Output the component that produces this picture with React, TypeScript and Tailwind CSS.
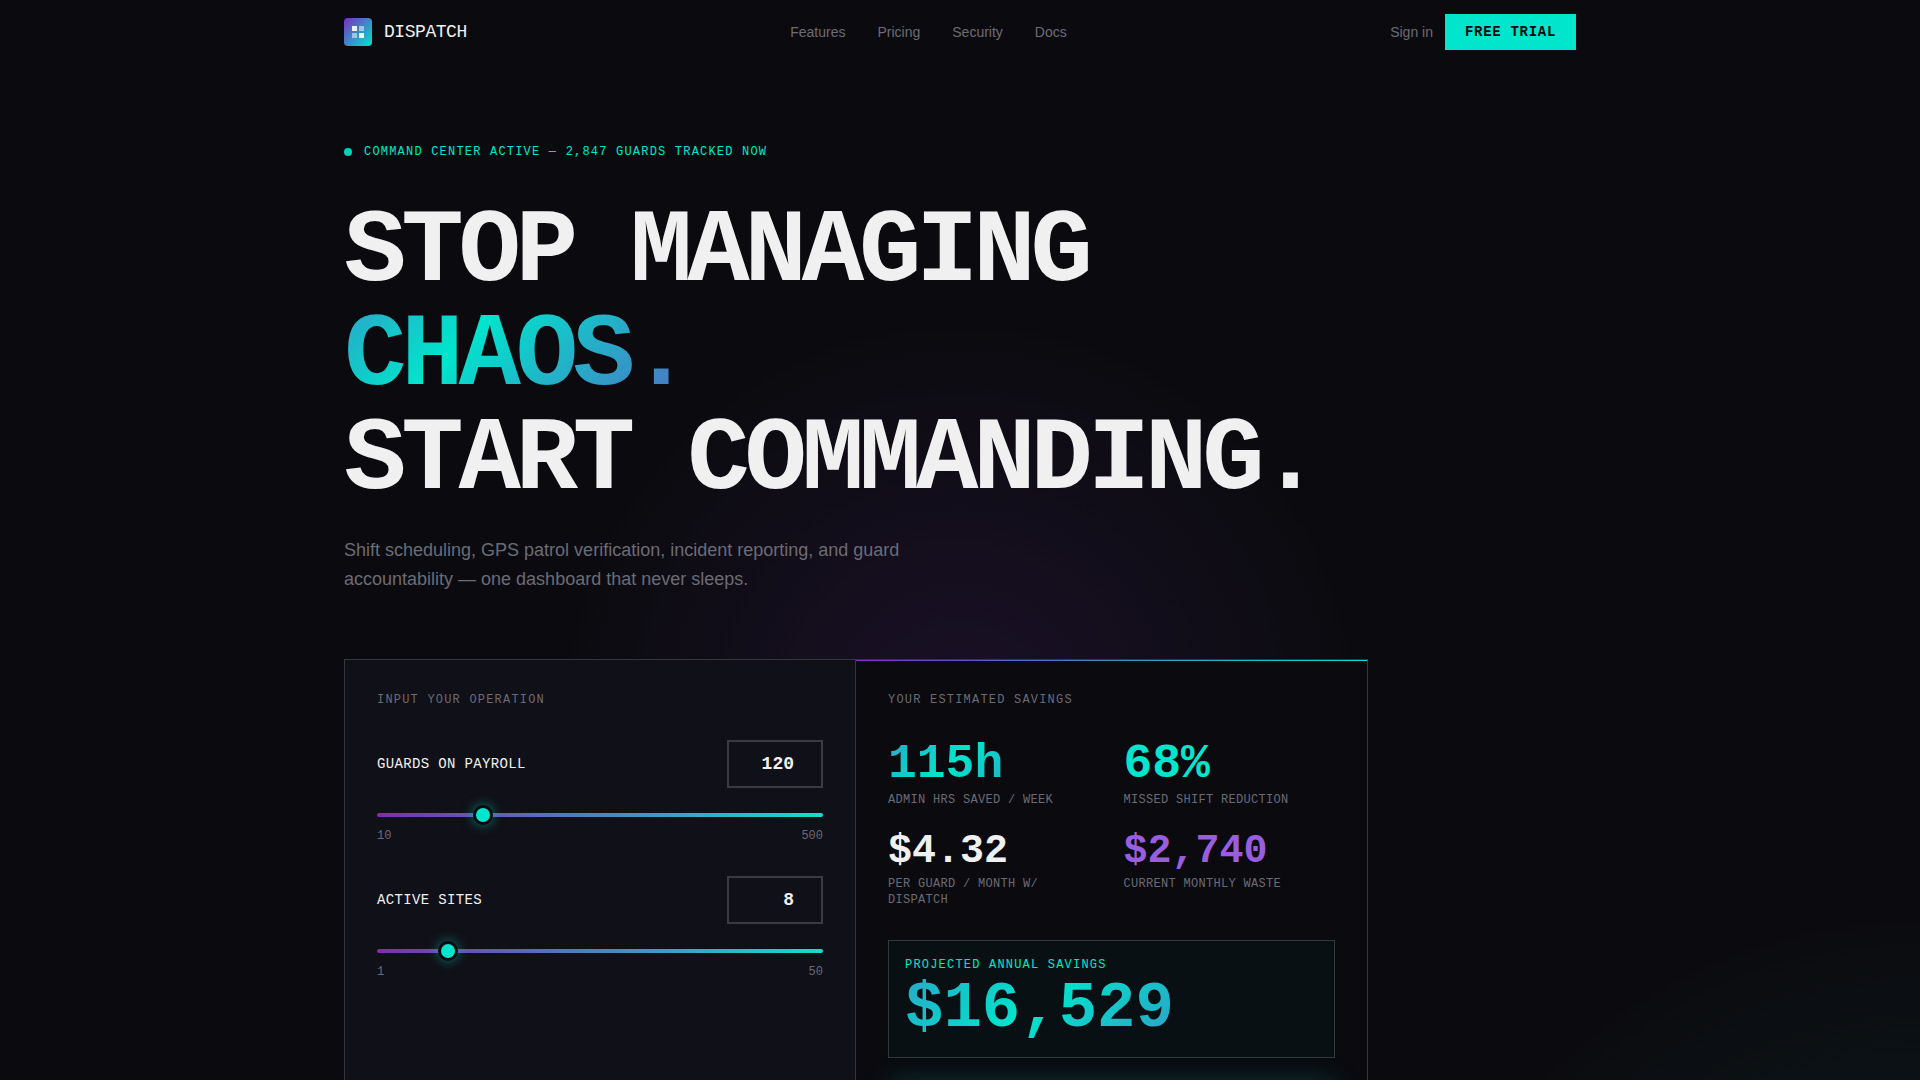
import { useState, ChangeEvent } from 'react';

interface SliderFieldProps {
  id: string;
  label: string;
  min: number;
  max: number;
  value: number;
  onChange: (value: number) => void;
}

interface StatProps {
  value: string;
  label: string;
  valueClass: string;
}

const NAV_LINKS = ['Features', 'Pricing', 'Security', 'Docs'];

const GRADIENT_TEXT =
  'bg-[linear-gradient(135deg,#7b2fbe_0%,#00e5cc_50%,#7b2fbe_100%)] bg-[length:200%_200%] bg-[position:70%_50%] bg-clip-text text-transparent';

const THUMB =
  '[&::-webkit-slider-thumb]:size-5 [&::-webkit-slider-thumb]:-mt-2 [&::-webkit-slider-thumb]:appearance-none [&::-webkit-slider-thumb]:rounded-full [&::-webkit-slider-thumb]:border-[3px] [&::-webkit-slider-thumb]:border-[#0a0a0f] [&::-webkit-slider-thumb]:bg-[#00e5cc] [&::-webkit-slider-thumb]:shadow-[0_0_12px_rgba(0,229,204,0.5)]';

const TRACK =
  '[&::-webkit-slider-runnable-track]:h-1 [&::-webkit-slider-runnable-track]:rounded-xs [&::-webkit-slider-runnable-track]:bg-[linear-gradient(90deg,#7b2fb4,#18dcc8)]';

function Logo() {
  return (
    <a href="#" className="flex items-center gap-3">
      <svg width="28" height="28" viewBox="0 0 28 28" aria-hidden="true">
        <defs>
          <linearGradient id="logo-fill" x1="0" y1="0" x2="1" y2="1">
            <stop offset="0" stopColor="#7b2fbe" />
            <stop offset="1" stopColor="#00e5cc" />
          </linearGradient>
        </defs>
        <rect width="28" height="28" rx="4" fill="url(#logo-fill)" />
        <rect x="8" y="8" width="5" height="5" fill="#fff" fillOpacity="0.9" />
        <rect x="15" y="8" width="5" height="5" fill="#fff" fillOpacity="0.5" />
        <rect x="8" y="15" width="5" height="5" fill="#fff" fillOpacity="0.5" />
        <rect x="15" y="15" width="5" height="5" fill="#fff" fillOpacity="0.9" />
      </svg>
      <span className="font-['Liberation_Mono',monospace] text-lg tracking-tight">DISPATCH</span>
    </a>
  );
}

function SliderField({ id, label, min, max, value, onChange }: SliderFieldProps) {
  const handleChange = (e: ChangeEvent<HTMLInputElement>): void => {
    onChange(Number(e.target.value));
  };

  return (
    <div>
      <div className="flex items-center justify-between">
        <label htmlFor={id} className="text-sm leading-[22px] tracking-wide">{label}</label>
        <input
          id={id}
          type="number"
          min={min}
          max={max}
          value={value}
          onChange={handleChange}
          className="w-24 border-2 border-[#3a3a40] bg-transparent px-3 py-2 text-right text-lg font-bold outline-none focus:border-[#00e5cc]"
        />
      </div>
      <div className="mt-4 mb-0.5 flex h-[22px] items-center">
        <input
          type="range"
          aria-label={label}
          min={min}
          max={max}
          value={value}
          onChange={handleChange}
          className={`w-full cursor-pointer appearance-none bg-transparent ${TRACK} ${THUMB}`}
        />
      </div>
      <div className="flex justify-between text-xs text-[#6b6b76]">
        <span>{min}</span>
        <span>{max}</span>
      </div>
    </div>
  );
}

function Stat({ value, label, valueClass }: StatProps) {
  return (
    <div>
      <div className={`font-bold ${valueClass}`}>{value}</div>
      <div className="mt-1 text-xs tracking-wide text-[#6b6b76]">{label}</div>
    </div>
  );
}

export default function App() {
  const [guards, setGuards] = useState<number>(120);
  const [sites, setSites] = useState<number>(8);

  return (
    <div className="relative min-h-screen bg-[#0b0b0f] bg-[radial-gradient(circle_400px_at_50%_720px,rgba(123,47,190,0.14),transparent),radial-gradient(circle_540px_at_100%_1450px,rgba(0,229,204,0.1),transparent)] font-['Liberation_Sans',sans-serif] text-[#f0f0f0]">
      <header className="mx-auto flex h-16 max-w-7xl items-center justify-between px-6">
        <Logo />
        <nav className="flex gap-8 text-sm text-[#6b6b76]">
          {NAV_LINKS.map((link) => (
            <a key={link} href="#" className="hover:text-white">{link}</a>
          ))}
        </nav>
        <div className="flex items-center gap-3">
          <a href="#" className="text-sm text-[#6b6b76] hover:text-white">Sign in</a>
          <button
            type="button"
            className="bg-[#00e5cc] px-5 py-2 font-['Liberation_Mono',monospace] text-sm font-bold tracking-wider text-[#0a0a0f]"
          >
            FREE TRIAL
          </button>
        </div>
      </header>

      <main className="mx-auto max-w-7xl px-6 pt-20 pb-20">
        <div className="mb-10 flex items-center gap-3 font-['Liberation_Mono',monospace] text-xs tracking-widest text-[#00e5cc]">
          <span className="size-2 rounded-full bg-[#00e5cc] opacity-90" />
          COMMAND CENTER ACTIVE — 2,847 GUARDS TRACKED NOW
        </div>

        <h1 className="mb-6 font-['Liberation_Mono',monospace] text-[104px] leading-none font-bold tracking-tighter">
          <span className="block">STOP MANAGING</span>
          <span className={`block w-fit ${GRADIENT_TEXT}`}>CHAOS.</span>
          <span className="block">START COMMANDING.</span>
        </h1>

        <p className="mb-[65px] max-w-xl text-lg leading-[29px] text-[#6b6b76]">
          Shift scheduling, GPS patrol verification, incident reporting, and guard accountability — one dashboard that
          never sleeps.
        </p>

        <div className="grid max-w-5xl grid-cols-2 border border-[#36363c] font-['Liberation_Mono',monospace]">
          <section className="border-r border-[#36363c] bg-[#101018] p-8">
            <h2 className="mb-8 text-xs tracking-widest text-[#6b6b76]">INPUT YOUR OPERATION</h2>
            <div className="flex flex-col gap-8">
              <SliderField id="guards" label="GUARDS ON PAYROLL" min={10} max={500} value={guards} onChange={setGuards} />
              <SliderField id="sites" label="ACTIVE SITES" min={1} max={50} value={sites} onChange={setSites} />
            </div>
          </section>

          <section className="bg-[#0a0a0f] bg-[linear-gradient(90deg,#7b2fbe,#00e5cc)] bg-[length:100%_1px] bg-no-repeat p-8">
            <h2 className="mb-8 text-xs tracking-widest text-[#6b6b76]">YOUR ESTIMATED SAVINGS</h2>
            <div className="mb-8 grid grid-cols-2 gap-6">
              <Stat value="115h" label="ADMIN HRS SAVED / WEEK" valueClass={`text-5xl leading-none ${GRADIENT_TEXT}`} />
              <Stat value="68%" label="MISSED SHIFT REDUCTION" valueClass="text-5xl leading-none text-[#00e5cc]" />
              <Stat value="$4.32" label="PER GUARD / MONTH W/ DISPATCH" valueClass="text-[40px] leading-none" />
              <Stat value="$2,740" label="CURRENT MONTHLY WASTE" valueClass="text-[40px] leading-none text-[#995edf]" />
            </div>
            <div className="mb-6 border border-[#33383c] bg-[#00e5cc]/3 p-4">
              <div className="mb-1 text-xs tracking-widest text-[#00e5cc]">PROJECTED ANNUAL SAVINGS</div>
              <div className={`text-[64px] leading-none font-bold ${GRADIENT_TEXT}`}>$16,529</div>
            </div>
            <button
              type="button"
              className="w-full bg-[#00e5cc] py-4 text-base font-bold tracking-wider text-[#0a0a0f] shadow-[0_0_30px_rgba(0,229,204,0.2)]"
            >
              START FREE TRIAL
            </button>
          </section>
        </div>
      </main>
    </div>
  );
}
